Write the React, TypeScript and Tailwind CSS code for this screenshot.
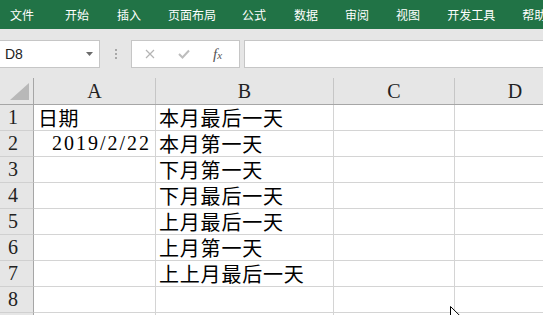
import React from "react";

const ribbon = ["文件", "开始", "插入", "页面布局", "公式", "数据", "审阅", "视图", "开发工具", "帮助"];
const ribbonX = [10, 65, 117, 168, 242, 294, 345, 396, 447, 522];

const cjk = { fontFamily: '"Noto Sans CJK SC", "Liberation Serif", serif' };
const serif = { fontFamily: '"Liberation Serif", "Noto Sans CJK SC", serif' };

const rows: { a?: string; b?: string }[] = [
  { a: "日期", b: "本月最后一天" },
  { a: "2019/2/22", b: "本月第一天" },
  { b: "下月第一天" },
  { b: "下月最后一天" },
  { b: "上月最后一天" },
  { b: "上月第一天" },
  { b: "上上月最后一天" },
  {},
  {},
];

const cols: [string, number][] = [
  ["A", 122],
  ["B", 178],
  ["C", 121],
  ["D", 121],
];

export default function App() {
  return (
    <div className="relative w-[543px] h-[315px] overflow-hidden bg-white">
      {/* Ribbon */}
      <div className="h-[29px] bg-[#217346] flex items-center text-white text-[12px]" style={cjk}>
        {ribbon.map((t, i) => (
          <span
            key={t}
            className="shrink-0 whitespace-nowrap leading-[29px]"
            style={{ marginLeft: i === 0 ? ribbonX[0] : ribbonX[i] - ribbonX[i - 1] - ribbon[i - 1].length * 12 }}
          >
            {t}
          </span>
        ))}
      </div>

      {/* Formula bar */}
      <div className="h-[49px] bg-[#e6e6e6] pt-[11px] flex items-start">
        <div className="w-[100px] shrink-0 h-[28px] bg-white border border-l-0 border-[#c6c6c6] flex items-center justify-between pl-[5px] pr-[6px]">
          <span className="text-[14px] text-[#222] leading-none" style={{ fontFamily: '"Liberation Sans", Arial, sans-serif' }}>
            D8
          </span>
          <svg width="7" height="4" viewBox="0 0 7 4">
            <path d="M0 0 L7 0 L3.5 4 Z" fill="#6b6b6b" />
          </svg>
        </div>
        <div className="w-[31px] shrink-0 h-[28px] flex flex-col items-center justify-center gap-[2px]">
          <div className="w-[2px] h-[2px] bg-[#a8a8a8]" />
          <div className="w-[2px] h-[2px] bg-[#a8a8a8]" />
          <div className="w-[2px] h-[2px] bg-[#a8a8a8]" />
        </div>
        <div className="w-[109px] shrink-0 h-[28px] bg-white border border-[#c6c6c6] flex items-center">
          <svg className="ml-[13px]" width="10" height="10" viewBox="0 0 10 10">
            <path d="M1 1 L9 9 M9 1 L1 9" stroke="#b4b4b4" strokeWidth="1.2" />
          </svg>
          <svg className="ml-[23px]" width="12" height="10" viewBox="0 0 12 10">
            <path d="M1 5 L4.5 8.5 L11 1.5" stroke="#bdbdbd" strokeWidth="2" fill="none" />
          </svg>
          <span className="ml-[23px] text-[#555] italic leading-none text-[15px]" style={serif}>
            f<span className="text-[11px]">x</span>
          </span>
        </div>
        <div className="ml-[4px] flex-1 h-[28px] bg-white border border-r-0 border-[#c6c6c6]" />
      </div>

      {/* Column headers */}
      <div className="flex h-[27px] bg-[#e6e6e6] border-b border-[#a6a6a6]">
        <div className="w-[34px] shrink-0 border-r border-[#a6a6a6] relative">
          <svg className="absolute left-[10px] top-[5px]" width="19" height="17" viewBox="0 0 19 17">
            <path d="M19 0 L19 17 L0 17 Z" fill="#b8b8b8" />
          </svg>
        </div>
        {cols.map(([l, w]) => (
          <div
            key={l}
            className="shrink-0 border-r border-[#c6c6c6] flex items-end justify-center text-[20px] leading-[25px] text-[#222]"
            style={{ width: w, ...serif }}
          >
            {l}
          </div>
        ))}
      </div>

      {/* Rows */}
      {rows.map((r, i) => (
        <div key={i} className="flex h-[26px]">
          <div
            className="w-[34px] shrink-0 bg-[#e6e6e6] border-r border-b border-r-[#a6a6a6] border-b-[#d0d0d0] pl-[8px] text-[20px] leading-[25px] text-[#222]"
            style={serif}
          >
            {i < 8 ? i + 1 : ""}
          </div>
          <div className="w-[122px] shrink-0 border-r border-b border-[#d4d4d4] text-[20px] leading-[25px] text-black whitespace-nowrap">
            {r.a === "2019/2/22" ? (
              <div className="text-right pr-[4px] tracking-[2px]" style={serif}>
                {r.a}
              </div>
            ) : r.a ? (
              <div className="pl-[4px] tracking-[0.5px]" style={cjk}>
                {r.a}
              </div>
            ) : null}
          </div>
          <div className="w-[178px] shrink-0 border-r border-b border-[#d4d4d4] text-[20px] leading-[25px] text-black whitespace-nowrap">
            {r.b ? (
              <div className="pl-[3px] tracking-[0.8px]" style={cjk}>
                {r.b}
              </div>
            ) : null}
          </div>
          <div className="w-[121px] shrink-0 border-r border-b border-[#d4d4d4]" />
          <div className="w-[121px] shrink-0 border-r border-b border-[#d4d4d4]" />
        </div>
      ))}

      {/* Mouse cursor */}
      <svg className="absolute left-[450px] top-[306px]" width="12" height="18" viewBox="0 0 12 18">
        <path d="M0.5 0.5 L0.5 14 L3.8 11 L6.2 16.5 L8.2 15.6 L5.9 10.3 L10.5 10.3 Z" fill="white" stroke="black" strokeWidth="1" />
      </svg>
    </div>
  );
}
